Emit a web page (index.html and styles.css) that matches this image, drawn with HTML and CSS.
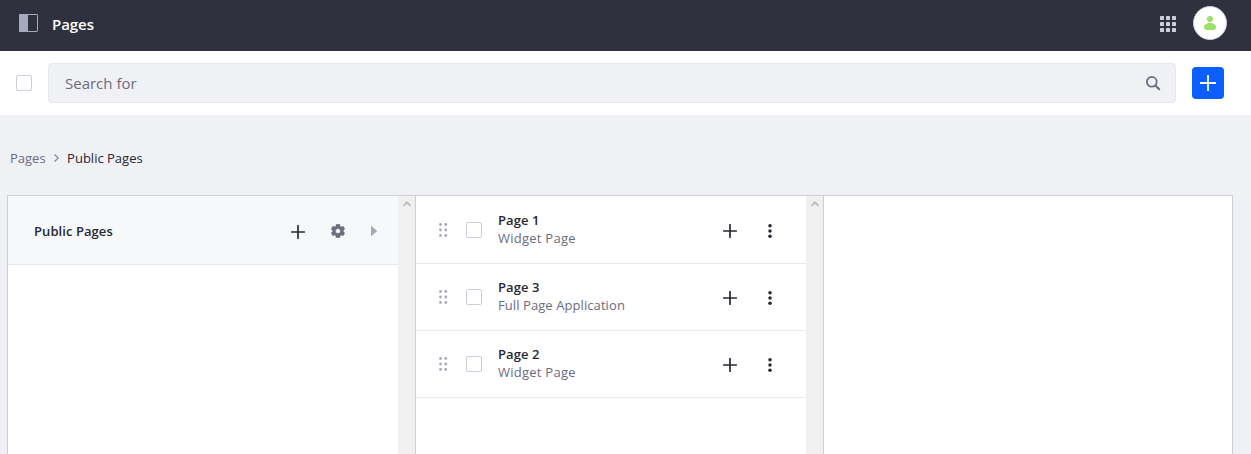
FILE: index.html
```html
<!DOCTYPE html>
<html lang="en">
<head>
<meta charset="utf-8">
<title>Pages</title>
<link rel="stylesheet" href="styles.css">
</head>
<body>
<svg width="0" height="0" class="defs">
  <symbol id="plus" viewBox="0 0 14 14"><path d="M7 .7v12.600M.7 7h12.600" fill="none" stroke="currentColor" stroke-width="1.700" stroke-linecap="round"/></symbol>
  <symbol id="dots" viewBox="0 0 4 14"><circle cx="2" cy="1.800" r="1.750"/><circle cx="2" cy="7" r="1.750"/><circle cx="2" cy="12.200" r="1.750"/></symbol>
  <symbol id="drag" viewBox="0 0 9 14"><circle cx="1.5" cy="1.5" r="1.4"/><circle cx="6.800" cy="1.5" r="1.4"/><circle cx="1.5" cy="7" r="1.4"/><circle cx="6.800" cy="7" r="1.4"/><circle cx="1.5" cy="12.5" r="1.4"/><circle cx="6.800" cy="12.5" r="1.4"/></symbol>
  <symbol id="up" viewBox="0 0 8 6"><path d="M.8 5.2V3.6L4 .6l3.2 3v1.6L4 2.5z" fill="#bcbcbc" stroke="#bcbcbc" stroke-width=".7"/></symbol>
</svg>
<header class="header">
  <svg class="panel-icon" width="19" height="18" viewBox="0 0 19 18"><rect x=".5" y=".5" width="18" height="17" rx=".6" fill="none" stroke="#a7a9bc"/><path d="M0 1Q0 0 1 0h8v18H1q-1 0-1-1z" fill="#a7a9bc"/></svg>
  <h1 class="title">Pages</h1>
  <svg class="apps-icon" width="16" height="16" viewBox="0 0 16 16" fill="#cdced9"><rect width="4" height="4" rx=".5"/><rect x="6" width="4" height="4" rx=".5"/><rect x="12" width="4" height="4" rx=".5"/><rect y="6" width="4" height="4" rx=".5"/><rect x="6" y="6" width="4" height="4" rx=".5"/><rect x="12" y="6" width="4" height="4" rx=".5"/><rect y="12" width="4" height="4" rx=".5"/><rect x="6" y="12" width="4" height="4" rx=".5"/><rect x="12" y="12" width="4" height="4" rx=".5"/></svg>
  <span class="avatar"><svg width="12" height="14" viewBox="0 0 12 14" fill="#9be169"><circle cx="6" cy="3" r="3"/><path d="M6 7c3.600 0 6 1.700 6 4.400 0 1.900-1.500 2.600-6 2.600s-6-.7-6-2.600C0 8.700 2.400 7 6 7z"/></svg></span>
</header>
<div class="toolbar">
  <span class="check"></span>
  <div class="search"><span class="search-text">Search for</span>
    <svg width="15" height="15" viewBox="0 0 15 15" fill="none" stroke="#6b6c7e" stroke-width="1.8"><circle cx="5.800" cy="5.800" r="4.900"/><path d="M9.400 9.400l3.800 3.800" stroke-width="2.100" stroke-linecap="round"/></svg>
  </div>
  <span class="add"><svg width="16" height="16" viewBox="0 0 16 16"><path d="M8 .5v15M.5 8h15" stroke="#fff" stroke-width="1.800" stroke-linecap="round"/></svg></span>
</div>
<nav class="crumbs">
  <span class="crumb">Pages</span>
  <svg width="5" height="8" viewBox="0 0 5 8"><path d="M.6.5L4.200 4 .6 7.500" fill="none" stroke="#85869a" stroke-width="1.2"/></svg>
  <span class="crumb current">Public Pages</span>
</nav>
<main class="board">
  <section class="column">
    <div class="list">
      <div class="row root">
        <span class="name root-name">Public Pages</span>
        <svg class="plus" width="14" height="14"><use href="#plus"/></svg>
        <svg class="gear" width="14" height="14" viewBox="0 0 14 14"><path fill="#6b6c7e" fill-rule="evenodd" stroke="#6b6c7e" stroke-width=".5" stroke-linejoin="round" d="M5.300.3h3.400l.4 1.900 1.200.7 1.900-.7 1.500 2.800L12.400 6.300v1.400l1.300 1.300-1.500 2.800-1.900-.7-1.200.7-.4 1.900H5.300l-.4-1.900-1.200-.7-1.900.7L.3 9l1.300-1.300V6.300L.3 5l1.500-2.800 1.900.7 1.200-.7zM7 4.500a2.500 2.500 0 1 0 0 5 2.500 2.500 0 0 0 0-5z"/></svg>
        <svg class="caret" width="6" height="10" viewBox="0 0 6 10"><path d="M0 .5Q0-.4.800.3l4.900 4.100q.6.600 0 1.200L.8 9.700Q0 10.400 0 9.500z" fill="#a7a9bc"/></svg>
      </div>
    </div>
    <div class="track"><svg width="8" height="6"><use href="#up"/></svg></div>
  </section>
  <section class="column">
    <div class="list">
      <div class="row"><svg class="drag" width="9" height="14"><use href="#drag"/></svg><span class="check"></span><div class="text"><div class="name">Page 1</div><div class="type">Widget Page</div></div><svg class="plus" width="14" height="14"><use href="#plus"/></svg><svg class="dots" width="4" height="14"><use href="#dots"/></svg></div>
      <div class="row"><svg class="drag" width="9" height="14"><use href="#drag"/></svg><span class="check"></span><div class="text"><div class="name">Page 3</div><div class="type long">Full Page Application</div></div><svg class="plus" width="14" height="14"><use href="#plus"/></svg><svg class="dots" width="4" height="14"><use href="#dots"/></svg></div>
      <div class="row"><svg class="drag" width="9" height="14"><use href="#drag"/></svg><span class="check"></span><div class="text"><div class="name">Page 2</div><div class="type">Widget Page</div></div><svg class="plus" width="14" height="14"><use href="#plus"/></svg><svg class="dots" width="4" height="14"><use href="#dots"/></svg></div>
    </div>
    <div class="track"><svg width="8" height="6"><use href="#up"/></svg></div>
  </section>
  <section class="column last"></section>
</main>
</body>
</html>
```
FILE: styles.css
```css
* { box-sizing: border-box; }
body { margin: 0; height: 454px; overflow: hidden; display: flex; flex-direction: column; background: #f0f1f5; color: #272833; font-family: "Open Sans", "Noto Sans", sans-serif; font-size: 13px; }
svg { display: block; flex: none; }
.defs { display: none; }
.header { flex: none; height: 51px; display: flex; align-items: center; background: #30313f; padding: 0 24px 0 19px; }
.panel-icon { margin: 0 14px 5px 0; }
.title { margin: 0 auto 3px 0; color: #fff; font-size: 15px; font-weight: 600; line-height: 20px; letter-spacing: -.05px; }
.apps-icon { margin: 0 17px 3px 0; }
.avatar { width: 34px; height: 34px; border-radius: 50%; border: 1px solid #cdced9; background: #fff; display: flex; align-items: center; justify-content: center; margin-bottom: 5px; }
.toolbar { flex: none; height: 64px; background: #fff; display: flex; align-items: center; gap: 16px; padding: 0 27px 0 16px; }
.check { flex: none; width: 16px; height: 16px; border: 1px solid #cdced9; border-radius: 2px; background: #fff; }
.search { flex: 1; height: 40px; border: 1px solid #e7e7ed; border-radius: 4px; background: #f0f1f5; display: flex; align-items: center; justify-content: space-between; padding: 0 14px 0 16px; color: #6b6c7e; }
.search-text { font-size: 15px; line-height: 20px; }
.add { width: 32px; height: 32px; border-radius: 4px; background: #0b5fff; display: flex; align-items: center; justify-content: center; }
.crumbs { flex: none; height: 80px; display: flex; align-items: center; padding: 6px 0 0 10px; line-height: 18px; }
.crumbs svg { margin: 0 8px 1px 8.5px; }
.crumb { color: #6b6c7e; }
.crumb.current { color: #272833; }
.board { flex: 1; display: flex; width: 1226px; margin-left: 7px; border: 1px solid #cdced9; border-bottom: 0; background: #fff; }
.column { width: 408px; display: flex; border-right: 1px solid #cdced9; }
.column.last { flex: 1; border: 0; }
.list { flex: 1; }
.track { width: 17px; background: #f0f0f0; padding: 5px 0 0 4.5px; }
.row { height: 67px; border-bottom: 1px solid #e7e7ed; display: flex; align-items: center; padding-left: 23px; }
.row:first-child { height: 68px; padding-top: 1px; }
.row.root { height: 69px; background: #f7f8f9; padding: 2px 0 0 26px; }
.name { font-weight: 600; line-height: 18px; letter-spacing: .07px; }
.root-name { width: 257px; }
.plus { color: #272833; margin-top: 2px; }
.root .plus { margin: 2px 26px 0 0; }
.root .gear { margin-right: 26px; }
.drag { fill: #a7a9bc; margin-right: 18px; }
.text { margin: 0 0 2px 16px; width: 225px; }
.type { color: #6b6c7e; line-height: 18px; letter-spacing: .25px; }
.type.long { letter-spacing: .08px; }
.row > .dots { fill: #272833; margin-left: 31px; margin-top: 2px; }
```
